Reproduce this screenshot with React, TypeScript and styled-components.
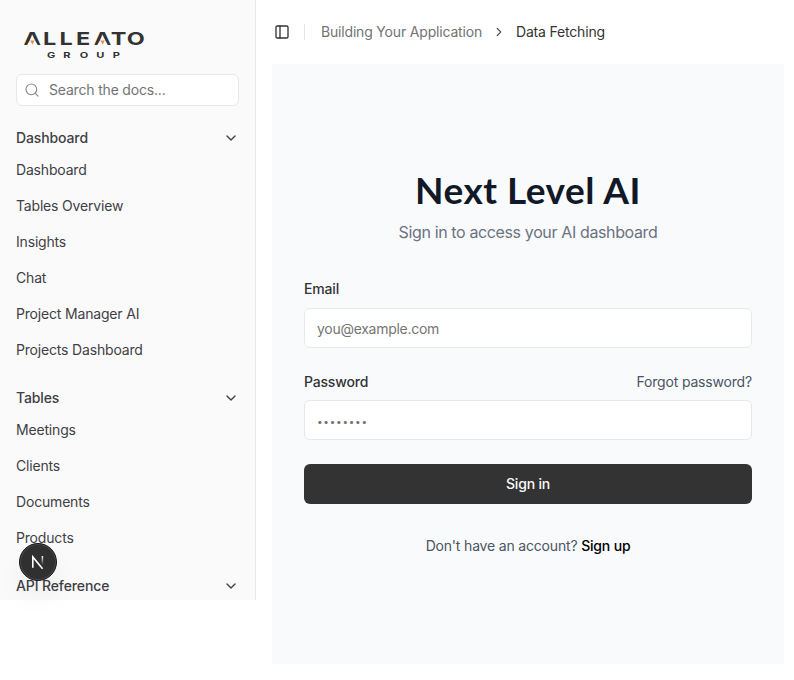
import React from "react";
import styled, { createGlobalStyle } from "styled-components";
import { ChevronDown, ChevronRight, PanelLeft, Search } from "lucide-react";

const GlobalStyle = createGlobalStyle`
  *, *::before, *::after { box-sizing: border-box; }
  html, body { margin: 0; background: #fff; overflow: hidden; }
  body { font-family: Inter, "Liberation Sans", sans-serif; font-size: 14px; line-height: 20px; letter-spacing: -0.18px; color: #333; -webkit-font-smoothing: antialiased; }
  h1, p, ul { margin: 0; padding: 0; }
  a { color: inherit; text-decoration: none; }
`;

const Page = styled.div`
  display: flex;
  align-items: flex-start;
  height: 680px;
`;

const Sidebar = styled.aside`
  width: 256px;
  height: 600px;
  flex: none;
  overflow: hidden;
  background: #fafafa;
  border-right: 1px solid #e5e7eb;
  padding: 24px 16px 0;
  color: #3f3f46;
`;

const Logo = styled.svg`
  display: block;
  width: 136px;
  height: 50px;
  letter-spacing: 0;
`;

const SearchBox = styled.label`
  display: flex;
  align-items: center;
  gap: 9px;
  height: 32px;
  padding: 0 7px;
  background: #fff;
  border: 1px solid #e8e8e8;
  border-radius: 6px;
  color: #8e8e8e;
  margin-bottom: 16px;
`;

const SearchInput = styled.input`
  flex: 1;
  min-width: 0;
  border: 0;
  outline: 0;
  padding: 0;
  background: transparent;
  font: inherit;
  letter-spacing: inherit;
  &::placeholder { color: #737373; opacity: 1; }
`;

const GroupTitle = styled.div`
  display: flex;
  align-items: center;
  justify-content: space-between;
  height: 32px;
  font-weight: 500;
  letter-spacing: -0.12px;
`;

const GroupItems = styled.ul`
  list-style: none;
  margin-bottom: 12px;
`;

const GroupItem = styled.li`
  height: 36px;
  line-height: 32px;
`;

const NavLink = styled.a`
  display: block;
  height: 32px;
`;

const Main = styled.main`
  width: 528px;
  padding-left: 16px;
`;

const Header = styled.header`
  display: flex;
  align-items: center;
  height: 64px;
  padding-left: 2px;
`;

const Divider = styled.span`
  width: 1px;
  height: 16px;
  margin: 0 16px 0 14px;
  background: #e5e5e5;
`;

const Crumb = styled.span<{ $current?: boolean }>`
  color: ${(p) => (p.$current ? "#333" : "#737373")};
`;

const CrumbArrow = styled(ChevronRight)`
  margin: 0 10px;
  color: #555;
`;

const Panel = styled.section`
  height: 600px;
  padding: 108px 32px 0;
  background: #f9fafc;
`;

const Title = styled.h1`
  height: 36px;
  font: 700 37px/36px Lato, "Open Sans", sans-serif;
  letter-spacing: 0.5px;
  text-align: center;
  color: #111827;
`;

const Subtitle = styled.p`
  margin-top: 12px;
  font-size: 16px;
  line-height: 24px;
  letter-spacing: -0.37px;
  text-align: center;
  color: #6b7280;
`;

const FieldHead = styled.div<{ $top: number; $bottom: number }>`
  display: flex;
  justify-content: space-between;
  margin: ${(p) => p.$top}px 0 ${(p) => p.$bottom}px;
`;

const FieldLabel = styled.label`
  font-weight: 500;
`;

const Forgot = styled.a`
  color: #4b5563;
`;

const Field = styled.input`
  display: block;
  width: 100%;
  height: 40px;
  padding: 0 12px;
  border: 1px solid #e8e8e8;
  border-radius: 6px;
  background: #fff;
  font: inherit;
  letter-spacing: -0.28px;
  outline: 0;
  &::placeholder { color: #757575; opacity: 1; }
  &[type="password"] { padding-top: 2px; font-size: 10px; letter-spacing: 0.72px; }
`;

const Submit = styled.button`
  display: block;
  width: 100%;
  height: 40px;
  margin-top: 24px;
  border: 0;
  border-radius: 6px;
  background: #333;
  color: #fafafa;
  font: inherit;
  font-weight: 500;
  letter-spacing: inherit;
`;

const Signup = styled.p`
  margin-top: 32px;
  text-align: center;
  color: #4b5563;
  a { font-weight: 500; color: #000; }
`;

const DevBadge = styled.div`
  position: fixed;
  left: 19px;
  top: 543px;
  width: 38px;
  height: 38px;
  display: grid;
  place-items: center;
  border-radius: 50%;
  background: #303030;
  border: 1px solid #191919;
  box-shadow: inset 0 0 0 1px #4a4a4a, 0 16px 32px -8px rgba(0, 0, 0, 0.14);
`;

const groups = [
  {
    title: "Dashboard",
    items: ["Dashboard", "Tables Overview", "Insights", "Chat", "Project Manager AI", "Projects Dashboard"],
  },
  { title: "Tables", items: ["Meetings", "Clients", "Documents", "Products"] },
  { title: "API Reference", items: [] },
];

function BrandLogo() {
  return (
    <Logo viewBox="0 0 136 50" role="img" aria-label="Alleato Group">
      <g fill="#333" fontFamily="Inter, sans-serif">
        <text transform="translate(0 20.8) scale(1.33 1)" x="5.7 20.3 32.8 45.2 58.5 71.2 83.3" y="0" fontSize="17.6" fontWeight="700">
          ALLEATO
        </text>
        <text transform="translate(0 33.8) scale(1.35 1)" x="23 35.1 47.2 59.5 71.6" y="0" fontSize="8.2" fontWeight="700">
          GROUP
        </text>
      </g>
      <g fill="#fafafa">
        <path d="M16.4 11.5 21.8 21.2H11z" />
        <path d="M86.6 11.5 92 21.2H81.2z" />
      </g>
      <g fill="#ef8b32">
        <path d="M14.2 16.5h4.4L16.4 20.6z" />
        <path d="M84.4 16.5h4.4L86.6 20.6z" />
      </g>
    </Logo>
  );
}

function NextMark() {
  return (
    <svg width="14" height="14" viewBox="0 0 14 14" fill="none">
      <defs>
        <linearGradient id="fade" x1="0" y1="1" x2="0" y2="10" gradientUnits="userSpaceOnUse">
          <stop stopColor="#fff" />
          <stop offset="1" stopColor="#fff" stopOpacity="0" />
        </linearGradient>
      </defs>
      <path d="M1.8 12.7V1.9L11.6 13.8" stroke="#fff" strokeWidth="1.6" />
      <path d="M11.4 1v9.6" stroke="url(#fade)" strokeWidth="1.5" />
    </svg>
  );
}

export default function App() {
  return (
    <>
      <GlobalStyle />
      <Page>
        <Sidebar>
          <BrandLogo />
          <SearchBox>
            <Search size={16} strokeWidth={1.8} />
            <SearchInput placeholder="Search the docs..." />
          </SearchBox>
          {groups.map((group) => (
            <React.Fragment key={group.title}>
              <GroupTitle>
                {group.title}
                <ChevronDown size={16} />
              </GroupTitle>
              <GroupItems>
                {group.items.map((item) => (
                  <GroupItem key={item}>
                    <NavLink href="#">{item}</NavLink>
                  </GroupItem>
                ))}
              </GroupItems>
            </React.Fragment>
          ))}
        </Sidebar>
        <Main>
          <Header>
            <PanelLeft size={16} />
            <Divider />
            <Crumb>Building Your Application</Crumb>
            <CrumbArrow size={14} />
            <Crumb $current>Data Fetching</Crumb>
          </Header>
          <Panel>
            <Title>Next Level AI</Title>
            <Subtitle>Sign in to access your AI dashboard</Subtitle>
            <FieldHead $top={35} $bottom={9}>
              <FieldLabel htmlFor="email">Email</FieldLabel>
            </FieldHead>
            <Field id="email" type="email" placeholder="you@example.com" />
            <FieldHead $top={24} $bottom={8}>
              <FieldLabel htmlFor="password">Password</FieldLabel>
              <Forgot href="#">Forgot password?</Forgot>
            </FieldHead>
            <Field id="password" type="password" placeholder="••••••••" />
            <Submit type="button">Sign in</Submit>
            <Signup>
              Don't have an account? <a href="#">Sign up</a>
            </Signup>
          </Panel>
        </Main>
      </Page>
      <DevBadge>
        <NextMark />
      </DevBadge>
    </>
  );
}
